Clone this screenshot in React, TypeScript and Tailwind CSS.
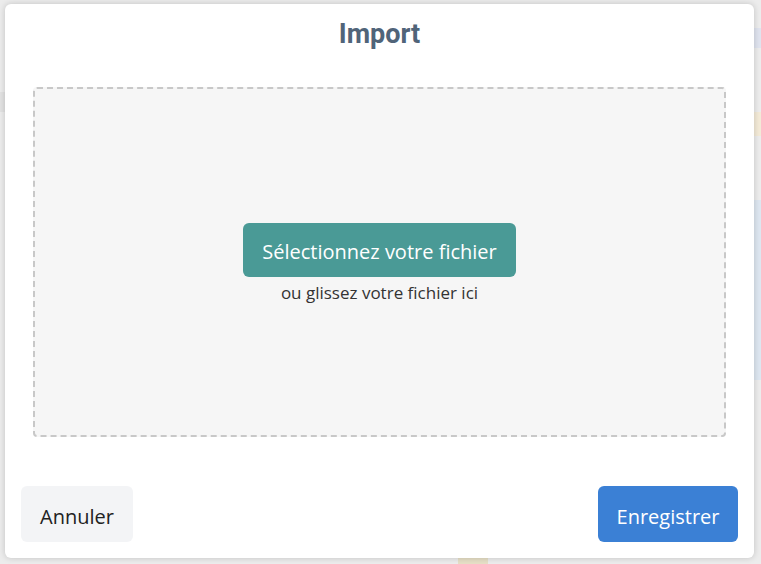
import React from "react";

export default function App() {
  return (
    <div className="relative w-[761px] h-[564px] overflow-hidden bg-[#ececec]" style={{ fontFamily: '"Open Sans", "Noto Sans", sans-serif' }}>
      {/* faint blurred page behind the modal */}
      <div className="absolute inset-0 pointer-events-none">
        <div className="absolute left-[754px] top-[28px] w-[10px] h-[20px] bg-[#dfe3ee]" />
        <div className="absolute left-[754px] top-[112px] w-[10px] h-[24px] bg-[#f3ead7]" />
        <div className="absolute left-[754px] top-[200px] w-[10px] h-[180px] bg-[#dde6f0]" />
        <div className="absolute left-[458px] top-[558px] w-[30px] h-[8px] bg-[#e6dfc6]" />
        <div className="absolute left-[0px] top-[92px] w-[5px] h-[20px] bg-[#e2e2e2]" />
      </div>
      <div className="relative pt-[4px] pl-[5px]">
        <div className="w-[749px] h-[554px] bg-white rounded-[6px] shadow-[0_0_6px_rgba(0,0,0,0.18)] flex flex-col">
          <div className="h-[63px] flex items-center justify-center">
            <h1 className="text-[27px] font-bold text-[#506479] leading-none mt-[-2px]" style={{ fontFamily: 'Roboto, "Noto Sans", sans-serif' }}>
              Import
            </h1>
          </div>
          <div className="px-[28px] pt-[20px]">
            <div className="h-[350px] bg-[#f6f6f6] border-2 border-dashed border-[#c8c8c8] rounded-[4px] flex flex-col items-center justify-center">
              <button className="mt-[4px] h-[54px] px-[19px] pt-[3px] rounded-[6px] bg-[#4a9a96] text-white text-[20px]">
                Sélectionnez votre fichier
              </button>
              <p className="mt-[4px] text-[17px] leading-[24px] text-[#333333]">ou glissez votre fichier ici</p>
            </div>
          </div>
          <div className="flex-1 flex items-end justify-between px-[16px] pb-[16px]">
            <button className="h-[56px] w-[112px] pt-[5px] rounded-[6px] bg-[#f3f4f6] text-[20px] text-[#222222]">
              Annuler
            </button>
            <button className="h-[56px] w-[140px] pt-[5px] rounded-[6px] bg-[#3b80d5] text-[20px] text-white">
              Enregistrer
            </button>
          </div>
        </div>
      </div>
    </div>
  );
}
